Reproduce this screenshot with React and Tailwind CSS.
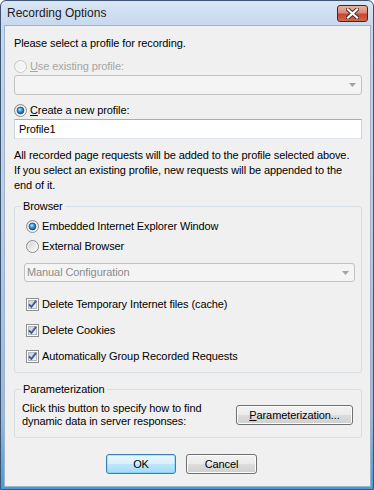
import React from "react";

function Radio({ id, checked, disabled }) {
  return (
    <svg width="13" height="13" viewBox="0 0 13 13" className="shrink-0">
      <defs>
        <linearGradient id={`rb-${id}`} x1="0" y1="0" x2="1" y2="1">
          <stop offset="0" stopColor={disabled ? "#ececec" : "#cfcfcf"} />
          <stop offset="1" stopColor={disabled ? "#fbfbfb" : "#ffffff"} />
        </linearGradient>
        <radialGradient id={`rd-${id}`} cx="0.4" cy="0.35" r="0.75">
          <stop offset="0" stopColor="#c4f0ff" />
          <stop offset="0.45" stopColor="#2b95dc" />
          <stop offset="1" stopColor="#0c3f80" />
        </radialGradient>
      </defs>
      <circle cx="6.5" cy="6.5" r="6" fill={`url(#rb-${id})`} stroke={disabled ? "#c6c6c6" : "#8d8d8d"} />
      <circle cx="6.5" cy="6.5" r="4.6" fill="none" stroke="#ffffff" strokeOpacity="0.6" strokeWidth="0.8" />
      {checked && (
        <circle cx="6.5" cy="6.5" r="3.4" fill={`url(#rd-${id})`} stroke="#1a4b85" strokeWidth="0.8" />
      )}
    </svg>
  );
}

function Check({ id }) {
  return (
    <svg width="13" height="13" viewBox="0 0 13 13" className="shrink-0">
      <defs>
        <linearGradient id={`cb-${id}`} x1="0" y1="0" x2="1" y2="1">
          <stop offset="0" stopColor="#c9cdd3" />
          <stop offset="1" stopColor="#f8f8f8" />
        </linearGradient>
      </defs>
      <rect x="0.5" y="0.5" width="12" height="12" fill="#ffffff" stroke="#8e8f8f" />
      <rect x="2.5" y="2.5" width="8" height="8" fill={`url(#cb-${id})`} stroke="#b4b8bd" />
      <path d="M3 6.3 L5.4 8.8 L10 2.8" fill="none" stroke="#3a4f8e" strokeWidth="1.9" />
      <path d="M3.6 6.2 L5.4 8 L9.4 3" fill="none" stroke="#7d92cc" strokeWidth="0.5" />
    </svg>
  );
}

function Arrow() {
  return (
    <svg width="7" height="4" viewBox="0 0 7 4" className="shrink-0">
      <polygon points="0,0 7,0 3.5,4" fill="#a3a3a3" />
    </svg>
  );
}

export default function App() {
  return (
    <div className="w-[374px] h-[490px] flex flex-col rounded-t-[6px] border border-[#3f5470] bg-[linear-gradient(180deg,#d8e5f4_0%,#c3d7ee_6%,#b8cee8_45%,#96b9df_85%,#3aa1de_100%)] font-['Liberation_Sans',Arial,sans-serif] text-black select-none">
      {/* title bar */}
      <div className="h-[24px] flex items-center justify-between pl-[6px] pr-[5px]">
        <span className="text-[12px] text-[#1b1b1b]">Recording Options</span>
        <div className="w-[31px] h-[17px] rounded-[3px] border border-[#5c1d16] bg-[linear-gradient(180deg,#eab1a3_0%,#dc8a78_45%,#c8462f_55%,#d1664b_100%)] flex items-center justify-center">
          <svg width="13" height="11" viewBox="0 0 13 11">
            <path d="M2 1.5 L11 9.5 M11 1.5 L2 9.5" stroke="#4a2a28" strokeWidth="4" strokeLinecap="square" />
            <path d="M2 1.5 L11 9.5 M11 1.5 L2 9.5" stroke="#ffffff" strokeWidth="2.2" strokeLinecap="square" />
          </svg>
        </div>
      </div>

      {/* client area */}
      <div className="flex-1 flex pl-[3px] pr-[2px] pb-[2px]">
        <div className="flex-1 flex flex-col bg-[#f0f0f0] border border-[#9fb2c9] pt-[10px] pl-[9px] pr-[8px] text-[11px] tracking-[-0.1px]">
          <div className="leading-[15px] whitespace-nowrap">Please select a profile for recording.</div>

          <div className="mt-[7px] h-4 flex items-center gap-[3px] text-[#a6a6a6]">
            <Radio id="r1" disabled />
            <span><span className="underline">U</span>se existing profile:</span>
          </div>
          <div className="mt-[1px] h-[20px] rounded-[3px] border border-[#c2c2c2] bg-[#f4f4f4] flex items-center justify-end pr-[5px]">
            <Arrow />
          </div>

          <div className="mt-[7px] h-4 flex items-center gap-[3px]">
            <Radio id="r2" checked />
            <span><span className="underline">C</span>reate a new profile:</span>
          </div>
          <div className="mt-[1px] h-[20px] border border-[#abadb3] border-x-[#c9d2de] border-b-[#dce4ee] bg-white flex items-center pl-[4px]">
            Profile1
          </div>

          <div className="mt-[9px] leading-[15px] whitespace-nowrap">
            All recorded page requests will be added to the profile selected above.
            <br />
            If you select an existing profile, new requests will be appended to the
            <br />
            end of it.
          </div>

          <fieldset className="mt-[5px] border border-[#d5dfe5] rounded-[3px]">
            <legend className="ml-[6px] px-[2px] leading-4">Browser</legend>
            <div className="flex flex-col pl-[9px] pr-[6px] pt-[4px] pb-[8px]">
              <div className="ml-[2px] h-4 flex items-center gap-[3px]">
                <Radio id="r3" checked />
                <span>Embedded Internet Explorer Window</span>
              </div>
              <div className="mt-[4px] ml-[2px] h-4 flex items-center gap-[3px]">
                <Radio id="r4" />
                <span>External Browser</span>
              </div>
              <div className="mt-[9px] h-[19px] rounded-[3px] border border-[#c2c2c2] bg-[#f4f4f4] flex items-center justify-between pl-[2px] pr-[5px] text-[#8c8c8c]">
                <span>Manual Configuration</span>
                <Arrow />
              </div>
              <div className="mt-[14px] ml-[2px] h-4 flex items-center gap-[3px]">
                <Check id="c1" />
                <span>Delete Temporary Internet files (cache)</span>
              </div>
              <div className="mt-[10px] ml-[2px] h-4 flex items-center gap-[3px]">
                <Check id="c2" />
                <span>Delete Cookies</span>
              </div>
              <div className="mt-[10px] ml-[2px] h-4 flex items-center gap-[3px]">
                <Check id="c3" />
                <span>Automatically Group Recorded Requests</span>
              </div>
            </div>
          </fieldset>

          <fieldset className="mt-[8px] border border-[#d5dfe5] rounded-[3px]">
            <legend className="ml-[6px] px-[2px] leading-4">Parameterization</legend>
            <div className="flex items-center justify-between pl-[7px] pr-[8px] pt-[5px] pb-[9px]">
              <div className="leading-[13px] whitespace-nowrap">
                Click this button to specify how to find
                <br />
                dynamic data in server responses:
              </div>
              <button className="w-[117px] h-[20px] rounded-[3px] border border-[#707070] bg-[linear-gradient(180deg,#f2f2f2_0%,#ebebeb_50%,#dddddd_50%,#cfcfcf_100%)] shadow-[inset_0_0_0_1px_#fcfcfc]">
                <span className="underline">P</span>arameterization...
              </button>
            </div>
          </fieldset>

          <div className="mt-[16px] flex gap-[10px] pl-[92px]">
            <button className="w-[70px] h-[20px] rounded-[3px] border border-[#3c7fb1] bg-[linear-gradient(180deg,#eaf6fd_0%,#d9f0fc_50%,#bee6fd_50%,#a7d9f5_100%)] shadow-[inset_0_0_0_1px_#48d0fa66]">
              OK
            </button>
            <button className="w-[71px] h-[20px] rounded-[3px] border border-[#707070] bg-[linear-gradient(180deg,#f2f2f2_0%,#ebebeb_50%,#dddddd_50%,#cfcfcf_100%)] shadow-[inset_0_0_0_1px_#fcfcfc]">
              Cancel
            </button>
          </div>
        </div>
      </div>
    </div>
  );
}
